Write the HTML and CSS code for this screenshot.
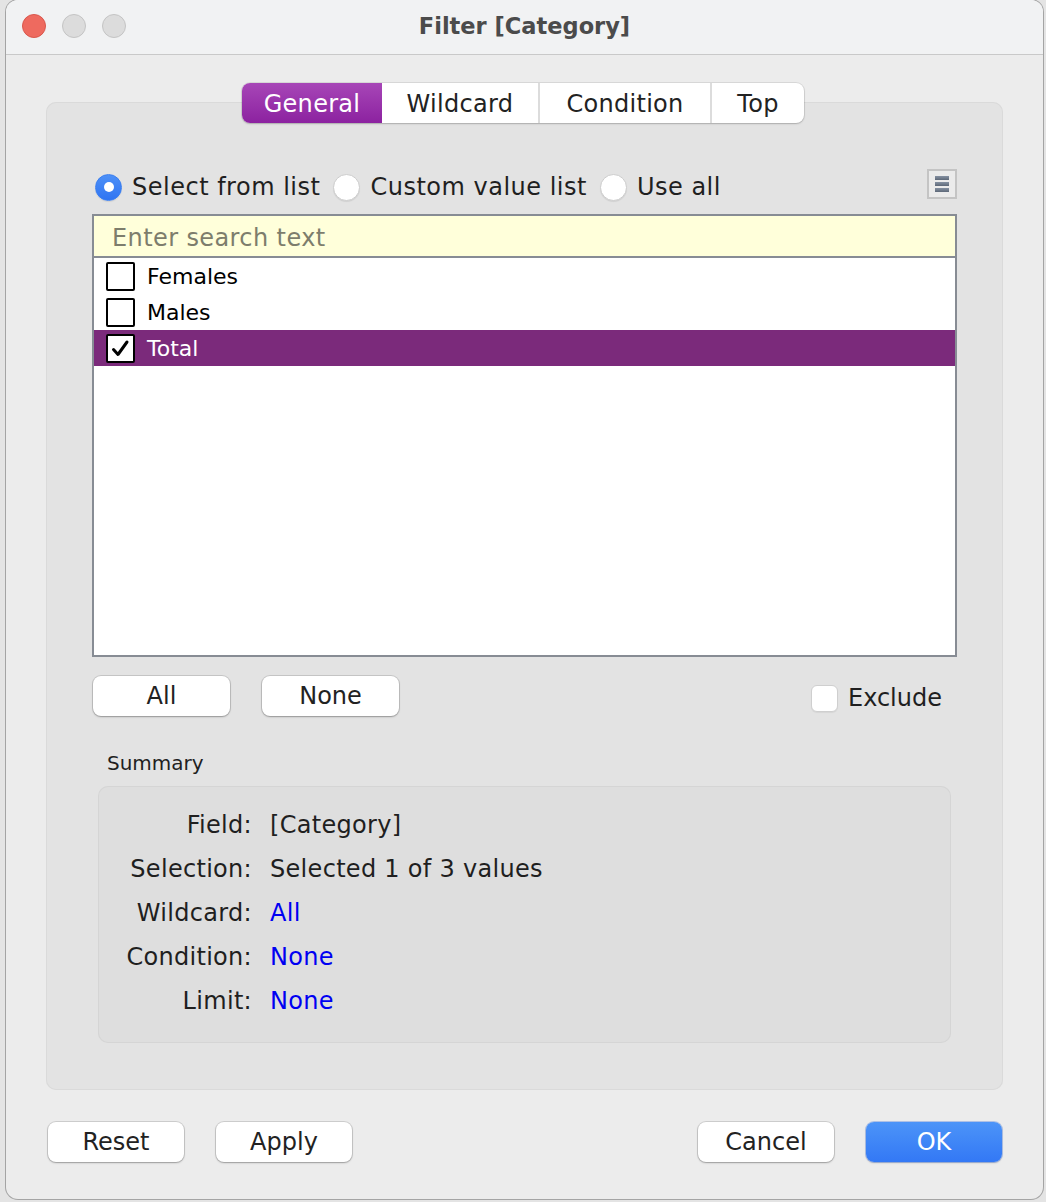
FILE: index.html
```html
<!DOCTYPE html>
<html>
<head>
<meta charset="utf-8">
<title>Filter [Category]</title>
<link rel="stylesheet" href="styles.css">
</head>
<body>
<div class="window">
  <div class="titlebar">
    <div class="lights">
      <span class="light close"></span>
      <span class="light"></span>
      <span class="light"></span>
    </div>
    <div class="title">Filter [Category]</div>
    <div></div>
  </div>
  <div class="body">
    <div class="panel">
      <div class="tabs">
        <div class="tab active">General</div>
        <div class="tab">Wildcard</div>
        <div class="tab">Condition</div>
        <div class="tab">Top</div>
      </div>
      <div class="radio-row">
        <label class="radio-opt"><span class="radio on"></span><span>Select from list</span></label>
        <label class="radio-opt"><span class="radio"></span><span>Custom value list</span></label>
        <label class="radio-opt"><span class="radio"></span><span>Use all</span></label>
        <span class="spacer"></span>
        <span class="menu-btn"><span class="bar"></span><span class="bar"></span><span class="bar"></span></span>
      </div>
      <div class="list">
        <div class="search">Enter search text</div>
        <div class="item"><span class="cb"></span><span>Females</span></div>
        <div class="item"><span class="cb"></span><span>Males</span></div>
        <div class="item selected"><span class="cb"><svg width="21" height="21" viewBox="0 0 21 21"><path d="M3.5 11.5 L8 16.5 L17 4" fill="none" stroke="#000" stroke-width="3" stroke-linecap="round" stroke-linejoin="round"/></svg></span><span>Total</span></div>
      </div>
      <div class="btn-row">
        <button class="btn">All</button>
        <button class="btn">None</button>
        <span class="spacer"></span>
        <label class="exclude"><span class="cb-mac"></span><span>Exclude</span></label>
      </div>
      <div class="summary-label">Summary</div>
      <div class="summary">
        <span class="k">Field:</span><span class="v">[Category]</span>
        <span class="k">Selection:</span><span class="v">Selected 1 of 3 values</span>
        <span class="k">Wildcard:</span><span class="v link">All</span>
        <span class="k">Condition:</span><span class="v link">None</span>
        <span class="k">Limit:</span><span class="v link">None</span>
      </div>
    </div>
    <div class="footer">
      <button class="btn">Reset</button>
      <button class="btn">Apply</button>
      <span class="spacer"></span>
      <button class="btn">Cancel</button>
      <button class="btn primary">OK</button>
    </div>
  </div>
</div>
</body>
</html>
```

FILE: styles.css
```css
* { box-sizing: border-box; }
html, body { margin: 0; padding: 0; }
body {
  background: #e4e4e4;
  font-family: "DejaVu Sans", "Liberation Sans", sans-serif;
  color: #1f1f1f;
  width: 1046px;
  height: 1202px;
  overflow: hidden;
}
.window {
  margin-left: 6px;
  width: 1037px;
  height: 1199px;
  background: #ececec;
  border-radius: 12px;
  box-shadow: 0 0 0 1px rgba(0,0,0,0.28);
  overflow: hidden;
  display: flex;
  flex-direction: column;
}
.titlebar {
  height: 55px;
  flex: none;
  background: #f1f2f3;
  border-bottom: 1px solid #c9c9c9;
  display: grid;
  grid-template-columns: 1fr auto 1fr;
  align-items: center;
  padding-bottom: 2px;
}
.lights { display: flex; gap: 16px; padding-left: 16px; }
.light {
  width: 24px; height: 24px; border-radius: 50%;
  background: #dcdcdc;
  border: 1px solid #c4c4c4;
}
.light.close { background: #ee6a5f; border-color: #d9574c; }
.title {
  font-weight: bold;
  font-size: 22.5px;
  color: #4b4b4b;
}
.body {
  flex: 1;
  display: flex;
  flex-direction: column;
}
.panel {
  margin: 47px 40px 0;
  height: 988px;
  background: #e3e3e3;
  border-radius: 10px;
  box-shadow: inset 0 0 0 1px #dadada;
  padding: 0 46px 47px;
  display: flex;
  flex-direction: column;
}
.tabs {
  align-self: center;
  margin-top: -19px;
  margin-left: -3px;
  height: 40px;
  display: flex;
  background: #fff;
  border-radius: 8px;
  box-shadow: 0 0 0 1px rgba(0,0,0,0.08), 0 1px 2px rgba(0,0,0,0.18);
  overflow: hidden;
  font-size: 24px;
  letter-spacing: 0.3px;
}
.tab {
  display: flex; align-items: center; justify-content: center;
  color: #222;
  border-left: 2px solid #dcdcdc;
  padding-top: 1px;
}
.tab:nth-child(1) { width: 140px; border-left: none; }
.tab:nth-child(2) { width: 156px; border-left: none; }
.tab:nth-child(3) { width: 172px; }
.tab:nth-child(4) { width: 94px; }
.tab.active {
  background: linear-gradient(#a746b7, #8c22a0);
  color: #fff;
}
.radio-row {
  margin-top: 49px;
  height: 30px;
  display: flex;
  align-items: center;
  font-size: 24px;
  letter-spacing: 0.5px;
  padding-left: 3px;
}
.radio-opt { display: flex; align-items: center; gap: 10px; margin-right: 13px; }
.radio {
  width: 27px; height: 27px; border-radius: 50%;
  background: #fff;
  border: 1px solid #cdcdcd;
  box-shadow: 0 1px 1px rgba(0,0,0,0.08);
  display: flex; align-items: center; justify-content: center;
}
.radio.on {
  background: linear-gradient(#4d90f7, #2f74f2);
  border-color: #3a7ef0;
}
.radio.on::after {
  content: ""; width: 10px; height: 10px; border-radius: 50%; background: #fff;
}
.spacer { flex: 1; }
.menu-btn {
  width: 30px; height: 30px;
  border: 2px solid #c4c4c4;
  background: #ebebeb;
  display: flex; flex-direction: column; align-items: center; justify-content: center;
  gap: 2px;
  margin-top: -6px;
}
.bar { width: 14px; height: 4px; background: linear-gradient(#8591a2, #5d6878); }
.list {
  margin-top: 12px;
  height: 443px;
  border: 2px solid #878c94;
  background: #fff;
  font-size: 22px;
  color: #000;
}
.search {
  height: 42px;
  background: #ffffda;
  border-bottom: 2px solid #878c94;
  font-size: 24px;
  letter-spacing: 0.4px;
  color: #7d7d6c;
  padding-left: 18px;
  padding-top: 3px;
  display: flex; align-items: center;
}
.item {
  height: 36px;
  display: flex; align-items: center;
  padding-left: 12px;
  gap: 12px;
  padding-top: 1px;
}
.item.selected { background: #7b2a7b; color: #fff; }
.cb {
  width: 29px; height: 29px;
  border: 2px solid #000;
  border-radius: 2px;
  background: #fff;
  display: flex; align-items: center; justify-content: center;
}
.btn-row {
  margin-top: 19px;
  height: 40px;
  display: flex;
  align-items: center;
  gap: 32px;
}
.btn {
  width: 137px; height: 40px;
  border: none;
  border-radius: 8px;
  background: #fff;
  box-shadow: 0 0 0 1px rgba(0,0,0,0.12), 0 1px 2px rgba(0,0,0,0.25);
  font-family: "DejaVu Sans", "Liberation Sans", sans-serif;
  font-size: 24px;
  color: #222;
  padding: 0;
}
.btn-row .btn:first-child { margin-left: 1px; }
.exclude {
  display: flex; align-items: center; gap: 10px;
  font-size: 24px;
  margin-right: 15px;
  margin-top: 4px;
}
.cb-mac {
  width: 27px; height: 27px; border-radius: 6px;
  background: #fff;
  border: 1px solid #cfcfcf;
  box-shadow: 0 1px 1px rgba(0,0,0,0.06);
}
.summary-label {
  margin-top: 35px;
  font-size: 20px;
  line-height: 24px;
  padding-left: 15px;
}
.summary {
  margin: 11px 6px 0;
  height: 257px;
  background: #dedede;
  border-radius: 10px;
  box-shadow: inset 0 0 0 1px #d5d5d5;
  padding-top: 17px;
  display: grid;
  grid-template-columns: 154px 1fr;
  grid-auto-rows: 44px;
  column-gap: 18px;
  font-size: 24px;
  line-height: 44px;
  letter-spacing: 0.3px;
}
.k { text-align: right; }
.link { color: #0000f2; }
.footer {
  margin-top: 32px;
  padding: 0 41px 0 42px;
  display: flex;
  gap: 32px;
}
.footer .btn { width: 136px; }
.btn.primary {
  background: linear-gradient(#4c94f8, #3378f5);
  color: #fff;
  box-shadow: 0 0 0 1px rgba(40,100,220,0.3), 0 1px 2px rgba(0,0,0,0.2);
}
```
